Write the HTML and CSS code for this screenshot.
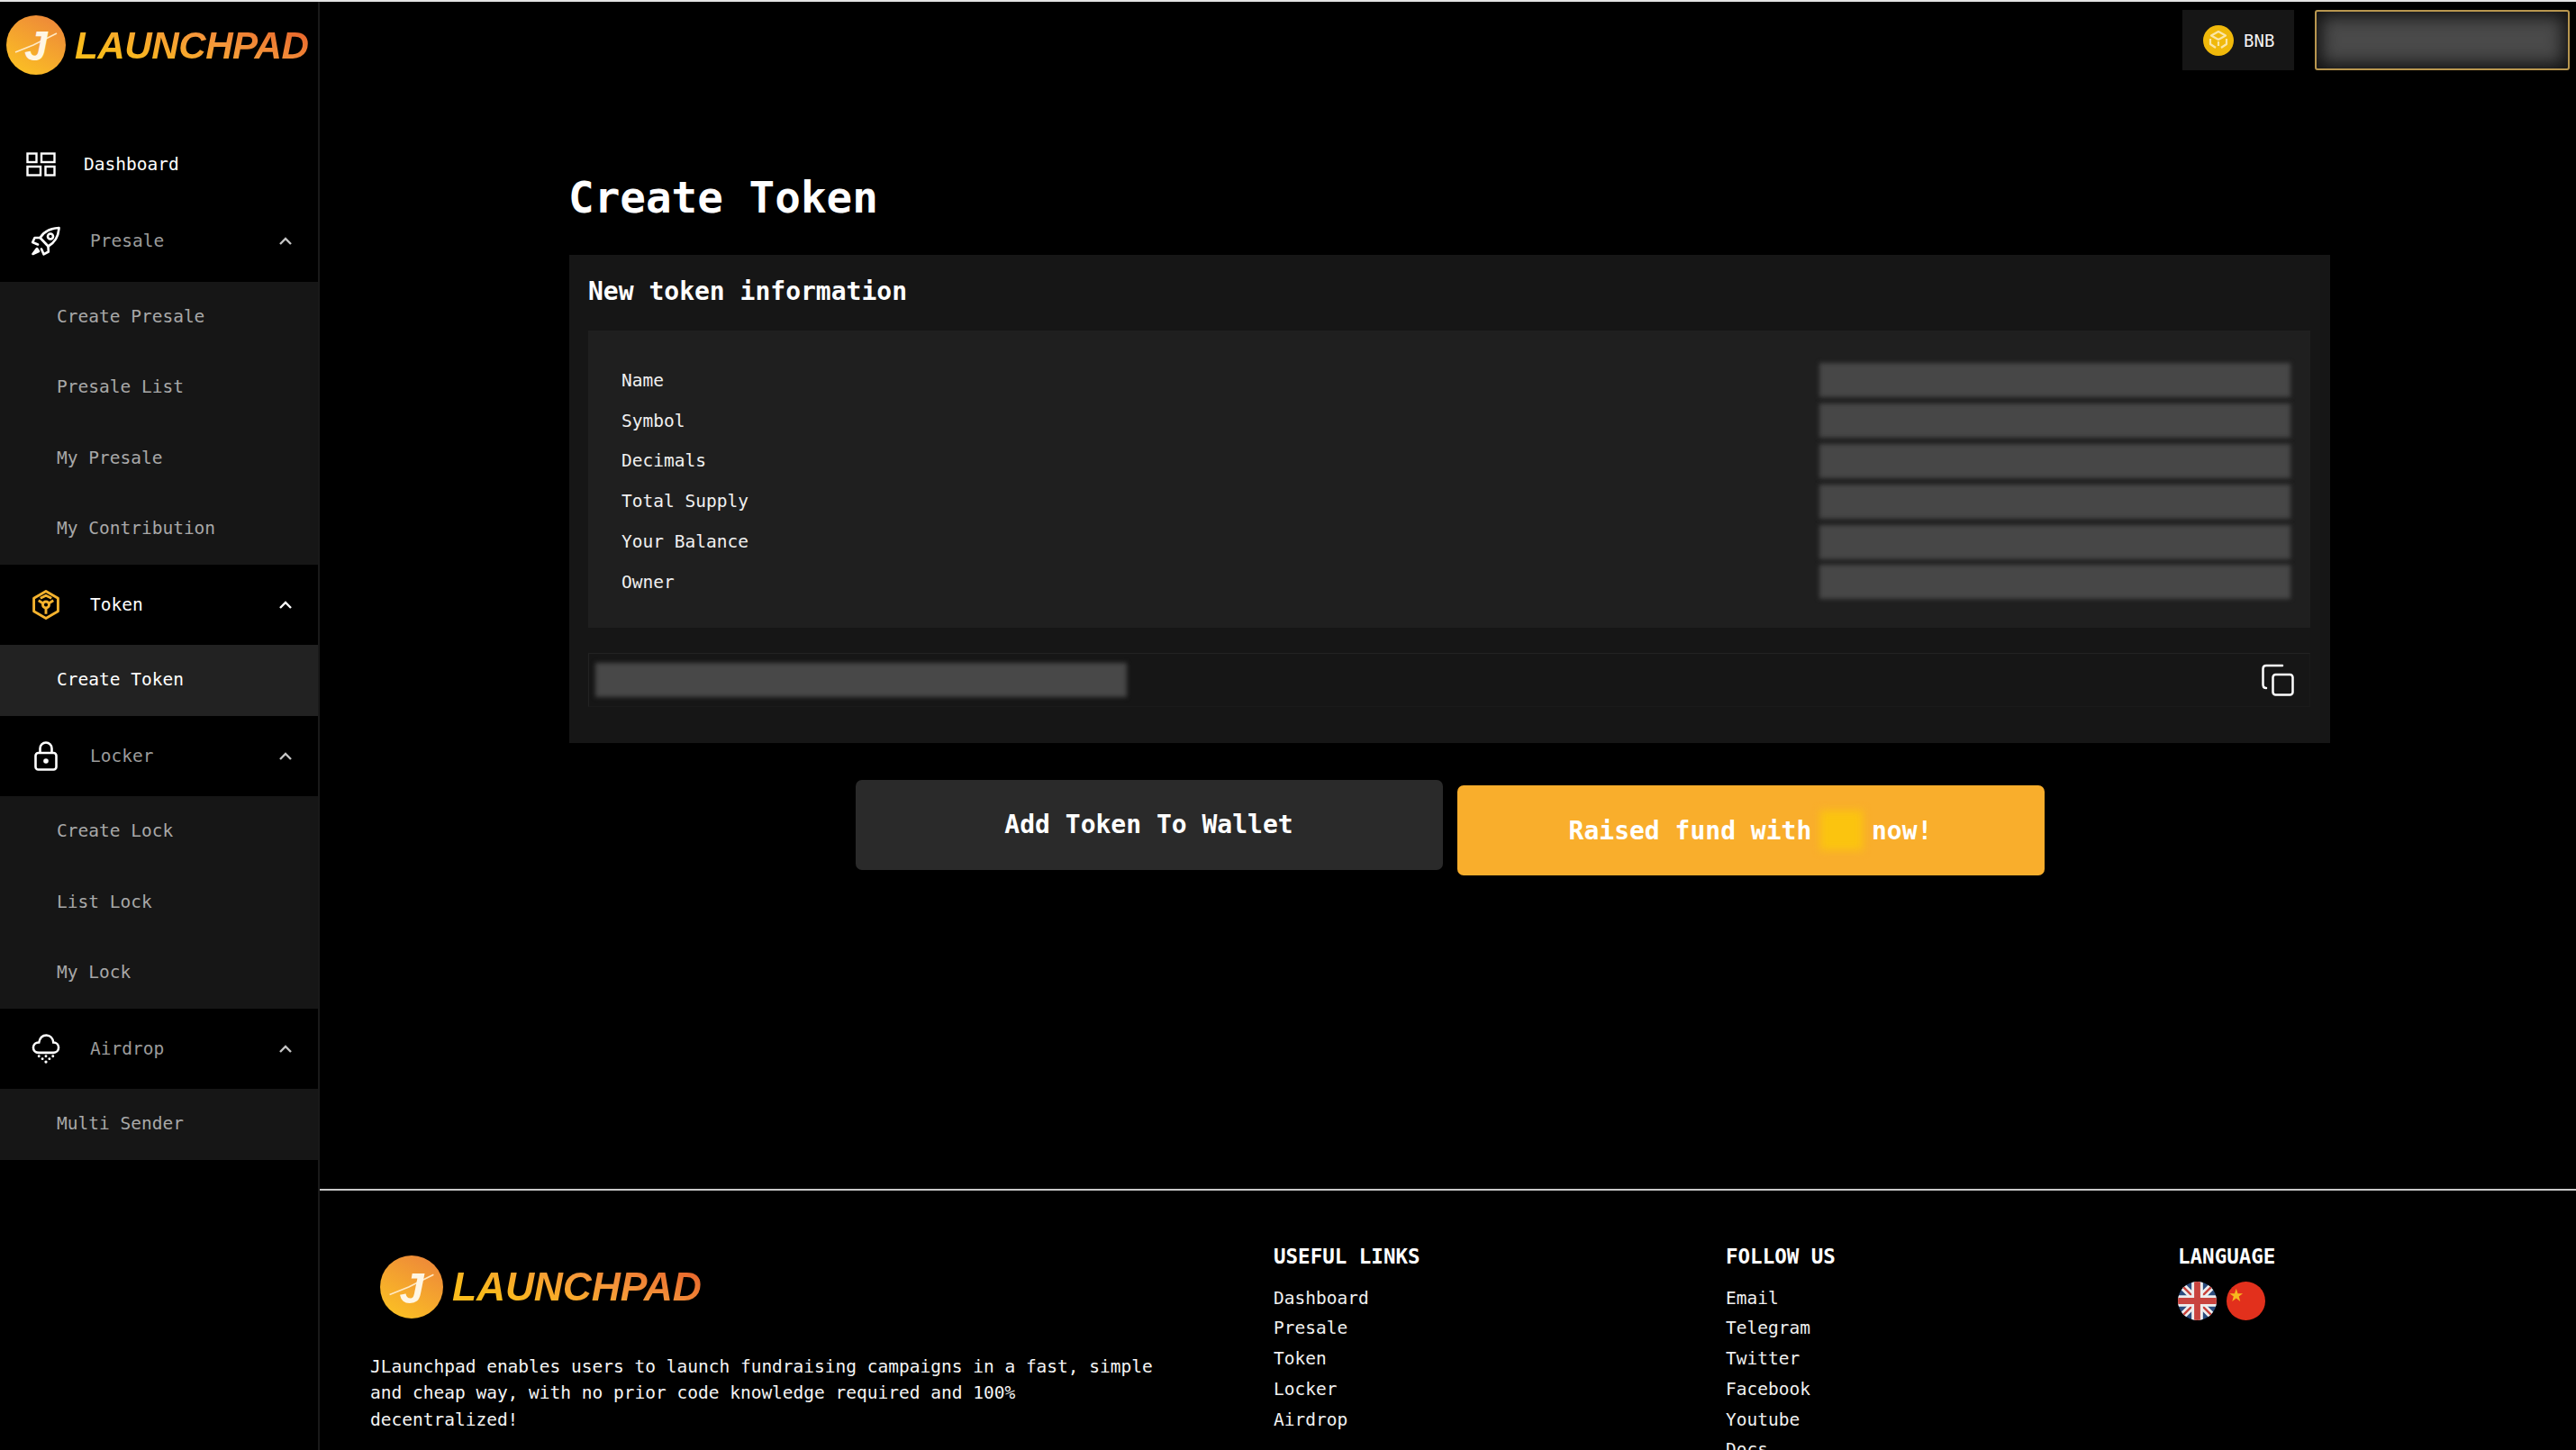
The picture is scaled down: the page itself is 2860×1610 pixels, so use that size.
FILE: index.html
```html
<!DOCTYPE html>
<html lang="en">
<head>
<meta charset="utf-8">
<title>Create Token</title>
<link rel="stylesheet" href="styles.css">
</head>
<body>
<div class="app">
  <aside class="sidebar">
    <div class="brand-top">
      <svg class="mark mark-top" viewBox="0 0 66 66">
        <defs>
          <linearGradient id="markfill" x1="0.8" y1="0.1" x2="0.3" y2="1">
            <stop offset="0" stop-color="#ee8b38"/>
            <stop offset="1" stop-color="#fbbf24"/>
          </linearGradient>
        </defs>
        <circle cx="33" cy="33" r="33" fill="url(#markfill)"/>
        <path d="M10 41 L30 33 L56 20" stroke="#ffe9c4" stroke-width="1.6" fill="none"/>
        <text x="33" y="50" class="mark-j">J</text>
      </svg>
      <span class="wordmark wordmark-top">LAUNCHPAD</span>
    </div>
    <nav class="nav">
      <a class="nav-head nav-dash">
        <svg class="ic ic-dash" viewBox="0 0 33 27" fill="none" stroke="#fff" stroke-width="2.4"><rect x="1.5" y="1.5" width="10" height="9.5"/><rect x="17" y="1.5" width="14.5" height="9.5"/><rect x="1.5" y="16" width="14.5" height="9.5"/><rect x="21.5" y="16" width="10" height="9.5"/></svg>
        <span class="label-on">Dashboard</span>
      </a>
      <a class="nav-head">
        <span class="ic-box"><svg class="ic" viewBox="0 0 32 32" fill="none" stroke="#fff" stroke-width="2.6" stroke-linejoin="round" stroke-linecap="round"><path d="M30.5 1.500 C22 2 14 5 9.500 12.500 L18.500 22 C26.500 17.500 30 10 30.500 1.500Z"/><circle cx="21" cy="11" r="3"/><path d="M9.500 12.500 L3.500 12.500 L1.200 17.500 L7 20"/><path d="M18.500 22 L18.800 28 L13.500 30.800 L11 25"/><path d="M6 24.500 L1.500 30.500 L8 27.500Z"/></svg></span>
        <span class="label-off">Presale</span>
        <svg class="chev" viewBox="0 0 14 9" fill="none" stroke="#c4c4c4" stroke-width="2.400"><path d="M1 8 L7 2 L13 8"/></svg>
      </a>
      <div class="sub">
        <a class="sub-item">Create Presale</a>
        <a class="sub-item">Presale List</a>
        <a class="sub-item">My Presale</a>
        <a class="sub-item">My Contribution</a>
      </div>
      <a class="nav-head">
        <span class="ic-box"><svg class="ic" viewBox="0 0 30 32" fill="none" stroke="#f5b32e" stroke-width="2.800" stroke-linejoin="round"><path d="M15 1.500 L28 9 L28 23 L15 30.500 L2 23 L2 9Z"/><path d="M7 11.500 L12 14.500 M23 11.500 L18 14.500 M15 20 L15 26 M9 9 L15 6 L21 9"/><circle cx="15" cy="16" r="3.400"/></svg></span>
        <span class="label-on">Token</span>
        <svg class="chev" viewBox="0 0 14 9" fill="none" stroke="#fff" stroke-width="2.400"><path d="M1 8 L7 2 L13 8"/></svg>
      </a>
      <div class="sub">
        <a class="sub-item sub-active">Create Token</a>
      </div>
      <a class="nav-head">
        <span class="ic-box"><svg class="ic ic-lock" viewBox="0 0 26 33" fill="none" stroke="#fff" stroke-width="2.600"><rect x="1.500" y="13" width="23" height="18.500" rx="3"/><path d="M6.500 13 V8 a6.500 6.500 0 0 1 13 0 V13"/><circle cx="13" cy="22" r="2.800" fill="#fff" stroke="none"/></svg></span>
        <span class="label-off">Locker</span>
        <svg class="chev" viewBox="0 0 14 9" fill="none" stroke="#c4c4c4" stroke-width="2.400"><path d="M1 8 L7 2 L13 8"/></svg>
      </a>
      <div class="sub">
        <a class="sub-item">Create Lock</a>
        <a class="sub-item">List Lock</a>
        <a class="sub-item">My Lock</a>
      </div>
      <a class="nav-head">
        <span class="ic-box"><svg class="ic" viewBox="0 0 32 34" fill="none" stroke="#fff" stroke-width="2.600"><path d="M8 21.500 C3.500 21.500 1.500 18.500 1.500 15.500 C1.500 12 4.500 9.500 8 9.800 C9 4.500 12.500 1.500 16.500 1.500 C21 1.500 24 5 24.500 9.800 C28 9.800 30.500 12.300 30.500 15.500 C30.500 19 28 21.500 24.500 21.500Z"/><g fill="#fff" stroke="none"><circle cx="8" cy="25.500" r="1.500"/><circle cx="16" cy="25.500" r="1.500"/><circle cx="24" cy="25.500" r="1.500"/><circle cx="12" cy="28.500" r="1.500"/><circle cx="20" cy="28.500" r="1.500"/><circle cx="16" cy="32" r="1.700"/></g></svg></span>
        <span class="label-off">Airdrop</span>
        <svg class="chev" viewBox="0 0 14 9" fill="none" stroke="#c4c4c4" stroke-width="2.400"><path d="M1 8 L7 2 L13 8"/></svg>
      </a>
      <div class="sub">
        <a class="sub-item">Multi Sender</a>
      </div>
    </nav>
  </aside>

  <div class="main">
    <header class="topbar">
      <div class="chain">
        <svg class="coin" viewBox="0 0 34 34"><circle cx="17" cy="17" r="17" fill="#f0b90b"/><g fill="none" stroke="#fbe6a6" stroke-width="2.200" stroke-linejoin="round"><path d="M17 7 L25 11.500 L17 16 L9 11.500Z"/><path d="M8 15 L8 21 L14 25 M26 15 L26 21 L20 25"/><path d="M17 18 L17 23"/></g></svg>
        <span>BNB</span>
      </div>
      <div class="wallet"></div>
    </header>

    <section class="content">
      <h1 class="title">Create Token</h1>
      <div class="card">
        <h2 class="card-title">New token information</h2>
        <div class="panel">
          <div class="row"><span>Name</span><i class="blur-val"></i></div>
          <div class="row"><span>Symbol</span><i class="blur-val"></i></div>
          <div class="row"><span>Decimals</span><i class="blur-val"></i></div>
          <div class="row"><span>Total Supply</span><i class="blur-val"></i></div>
          <div class="row"><span>Your Balance</span><i class="blur-val"></i></div>
          <div class="row"><span>Owner</span><i class="blur-val"></i></div>
        </div>
        <div class="address">
          <i class="blur-addr"></i>
          <svg class="copy" viewBox="0 0 36 36" fill="none" stroke="#fff" stroke-width="2.500" stroke-linecap="round"><path d="M23 2 H5 Q1.500 2 1.500 5.500 V23 Q1.500 27 5 27"/><rect x="12.500" y="12" width="22" height="22.500" rx="3"/></svg>
        </div>
      </div>
      <div class="actions">
        <button class="btn btn-dark">Add Token To Wallet</button>
        <button class="btn btn-amber">Raised fund with <i class="blur-token"></i> now!</button>
      </div>
    </section>

    <footer class="footer">
      <div class="foot-brand">
        <div class="foot-logo">
          <svg class="mark mark-foot" viewBox="0 0 66 66">
            <circle cx="33" cy="33" r="33" fill="url(#markfill)"/>
            <path d="M10 41 L30 33 L56 20" stroke="#ffe9c4" stroke-width="1.600" fill="none"/>
            <text x="33" y="50" class="mark-j">J</text>
          </svg>
          <span class="wordmark wordmark-foot">LAUNCHPAD</span>
        </div>
        <p class="foot-desc">JLaunchpad enables users to launch fundraising campaigns in a fast, simple and cheap way, with no prior code knowledge required and 100% decentralized!</p>
      </div>
      <div class="foot-col">
        <h3 class="foot-head">USEFUL LINKS</h3>
        <a class="foot-link">Dashboard</a>
        <a class="foot-link">Presale</a>
        <a class="foot-link">Token</a>
        <a class="foot-link">Locker</a>
        <a class="foot-link">Airdrop</a>
      </div>
      <div class="foot-col">
        <h3 class="foot-head">FOLLOW US</h3>
        <a class="foot-link">Email</a>
        <a class="foot-link">Telegram</a>
        <a class="foot-link">Twitter</a>
        <a class="foot-link">Facebook</a>
        <a class="foot-link">Youtube</a>
        <a class="foot-link">Docs</a>
      </div>
      <div class="foot-col">
        <h3 class="foot-head">LANGUAGE</h3>
        <div class="flags">
          <svg class="flag" viewBox="0 0 44 44">
            <defs><clipPath id="round"><circle cx="22" cy="22" r="22"/></clipPath></defs>
            <g clip-path="url(#round)">
              <rect width="44" height="44" fill="#2b4c7e"/>
              <path d="M0 0 L44 44 M44 0 L0 44" stroke="#eee" stroke-width="8"/>
              <path d="M0 0 L44 44 M44 0 L0 44" stroke="#c9443f" stroke-width="2.500"/>
              <path d="M22 0 V44 M0 22 H44" stroke="#eee" stroke-width="13"/>
              <path d="M22 0 V44 M0 22 H44" stroke="#c9443f" stroke-width="7"/>
            </g>
          </svg>
          <svg class="flag" viewBox="0 0 44 44">
            <circle cx="22" cy="22" r="22" fill="#e2301c"/>
            <polygon points="11,8 12.800,13.500 18.500,13.500 14,17 15.600,22.500 11,19 6.400,22.500 8,17 3.500,13.500 9.200,13.500" fill="#f7b81e"/>
          </svg>
        </div>
      </div>
    </footer>
  </div>
</div>
</body>
</html>
```
FILE: styles.css
```css
* { box-sizing: border-box; }
html, body { margin: 0; height: 1610px; overflow: hidden; background: #000; }
body { font-family: "DejaVu Sans Mono", "Liberation Mono", monospace; font-size: 19.5px; color: #fff; }
a { display: block; color: inherit; }

.app { display: flex; height: 1610px; border-top: 2px solid #e4e4e4; overflow: hidden; }

/* sidebar */
.sidebar { flex: 0 0 355px; border-right: 2px solid #191919; }
.brand-top { height: 139px; display: flex; align-items: flex-start; padding: 15px 0 0 7px; gap: 10px; }
.mark { display: block; flex: none; }
.mark-top { width: 66px; height: 66px; }
.mark-foot { width: 70px; height: 70px; }
.mark-j { font-family: "Liberation Sans", sans-serif; font-weight: 700; font-style: italic; font-size: 46px; fill: #fff6e4; text-anchor: middle; }
.wordmark {
  font-family: "Liberation Sans", sans-serif; font-weight: 700; font-style: italic;
  background: linear-gradient(20deg, #fbbc1c 20%, #f5963a 60%, #e8642c 95%);
  -webkit-background-clip: text; background-clip: text; color: transparent;
}
.wordmark-top { font-size: 42.200px; line-height: 48px; margin-top: 10px; letter-spacing: -0.500px; }

.nav-head { display: flex; align-items: center; height: 89.500px; padding: 0 29px 0 35px; gap: 33px; }
.nav-dash { height: 82px; padding-left: 29px; gap: 31px; }
.ic-box { width: 32px; display: flex; justify-content: center; flex: none; }
.ic { width: 32px; height: 33px; display: block; flex: none; }
.ic-dash { width: 33px; height: 27px; }
.ic-lock { width: 26px; }
.label-on { color: #fff; }
.label-off { color: #9b9b9b; }
.chev { width: 14px; height: 9px; margin-left: auto; }
.sub { background: #161616; }
.sub-item { height: 78.500px; line-height: 78.500px; padding-left: 63px; color: #a8a8a8; }
.sub-active { background: #222; color: #fff; }

/* main */
.main { flex: 1; min-width: 0; display: flex; flex-direction: column; }
.topbar { display: flex; justify-content: flex-end; gap: 23px; padding: 9px 7px 9px 0; height: 85px; flex: none; }
.chain { width: 124px; height: 67px; background: #161616; display: flex; align-items: center; padding-left: 23px; gap: 11px; font-size: 19px; color: #f2f2f2; }
.coin { width: 34px; height: 34px; flex: none; }
.wallet { width: 283px; height: 67px; background: #4a4a4a; border: 2px solid #b8964f; border-radius: 3px; box-shadow: inset 0 0 18px 6px #141414; }

.content { padding: 0 273px 0 277px; flex: none; }
.title { margin: 105px 0 35px -1px; font-size: 47.600px; line-height: 56px; font-weight: 700; }
.card { background: #161616; padding: 24px 22px 40px 21px; }
.card-title { margin: 0 0 26px; font-size: 28px; line-height: 34px; font-weight: 700; }
.panel { background: #1f1f1f; padding: 33px 22px 28px 37px; }
.row { height: 44.800px; display: flex; align-items: center; justify-content: space-between; color: #f0f0f0; }
.blur-val { display: block; width: 523px; height: 38px; background: #474747; filter: blur(2.500px); }
.address { margin-top: 28px; height: 60px; border: 1px solid #222; border-right-color: #1a1a1a; border-bottom-color: #1a1a1a; display: flex; align-items: center; justify-content: space-between; padding: 0 17px 0 7px; }
.blur-addr { display: block; width: 590px; height: 38px; background: #484848; filter: blur(2.500px); }
.copy { width: 36px; height: 36px; flex: none; }

.actions { display: flex; justify-content: center; align-items: flex-start; gap: 16px; margin-top: 41px; }
.btn { border: 0; width: 652px; height: 100px; border-radius: 7px; color: #fff; font: 700 28px "DejaVu Sans Mono", "Liberation Mono", monospace; display: flex; align-items: center; justify-content: center; white-space: pre; }
.btn-dark { background: #2a2a2a; }
.btn-amber { background: #f9ae2c; margin-top: 6px; padding-top: 2px; }
.blur-token { display: inline-block; width: 47px; height: 44px; margin: 0 -7px; background: #fbc40f; filter: blur(5px); }

/* footer */
.footer { margin-top: 348px; border-top: 2px solid #c8c8c8; padding: 58px 0 0 56px; display: flex; flex: none; }
.foot-brand { flex: 0 0 1003px; padding-top: 14px; }
.foot-logo { display: flex; align-items: center; gap: 10px; margin-left: 11px; height: 70px; }
.wordmark-foot { font-size: 44.500px; line-height: 50px; letter-spacing: -0.200px; }
.foot-desc { margin: 39px 0 0; width: 890px; line-height: 29.700px; color: #f4f4f4; }
.foot-col { flex: 0 0 502px; }
.foot-head { margin: 0 0 15px; font-size: 22.500px; line-height: 30px; font-weight: 700; }
.foot-link { line-height: 33.700px; color: #f0f0f0; }
.flags { display: flex; gap: 11px; margin-top: -2px; }
.flag { width: 43px; height: 43px; display: block; }
```
